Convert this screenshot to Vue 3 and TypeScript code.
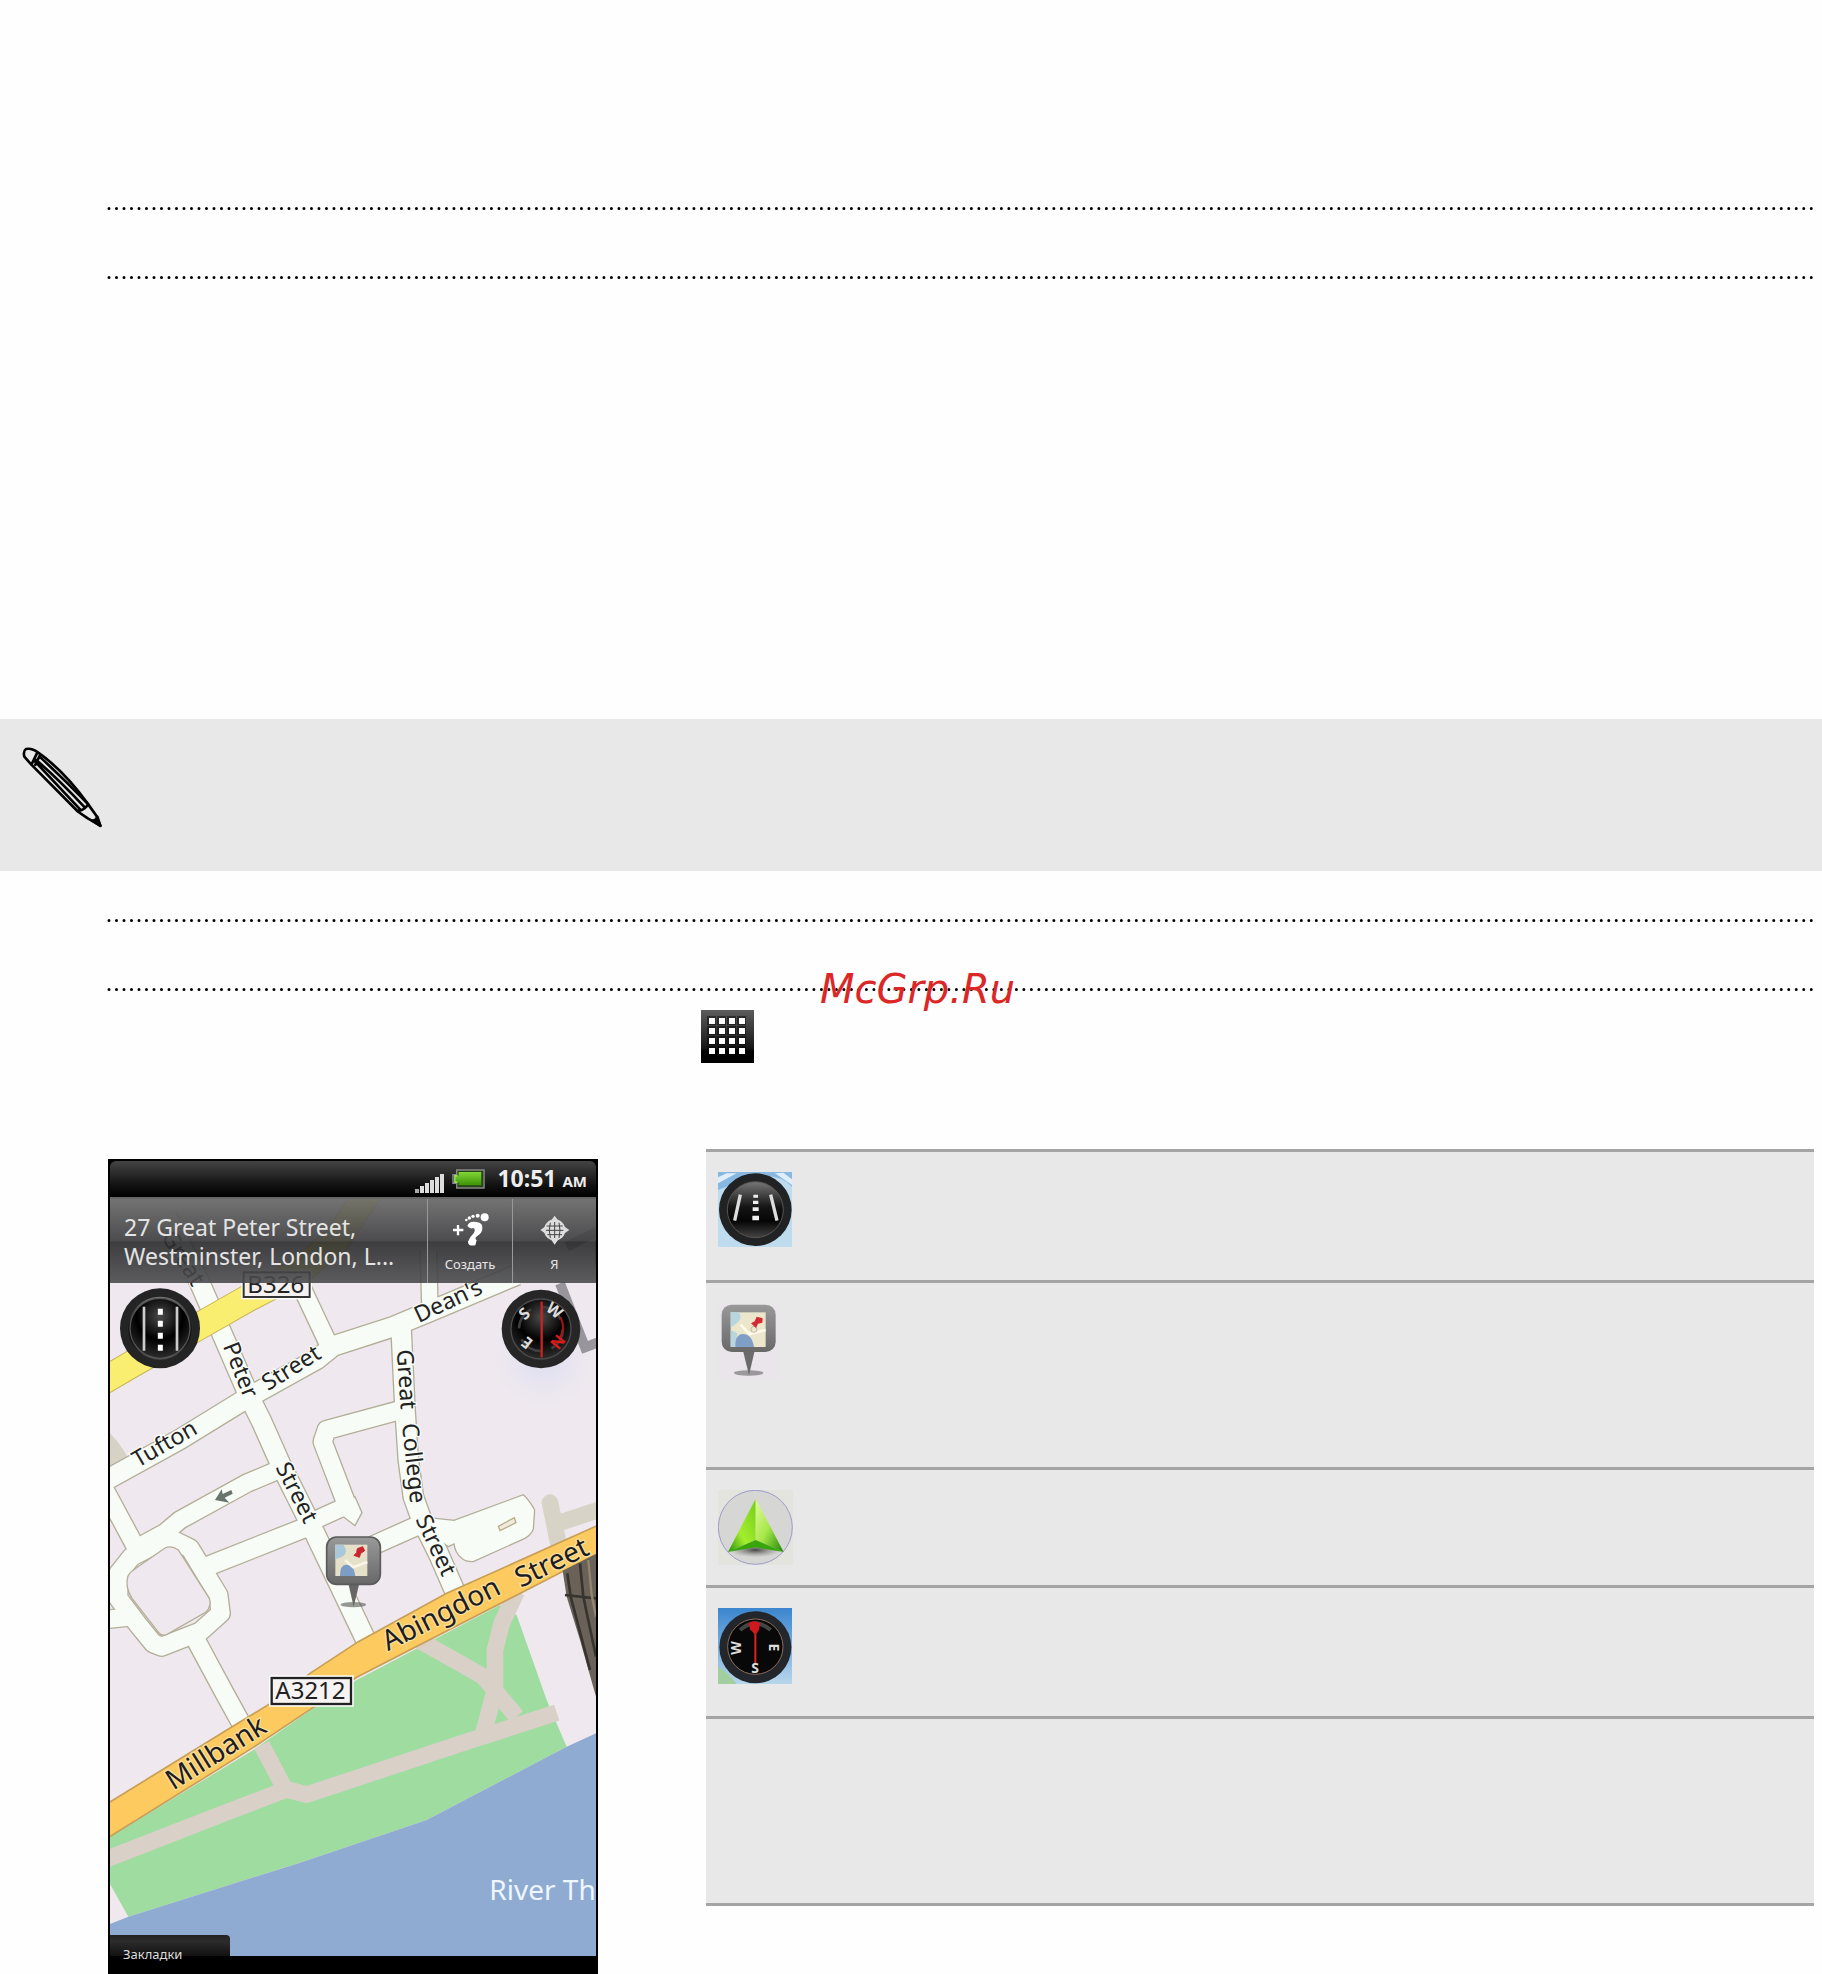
<script setup lang="ts">
interface Label {
  text: string
  x: number
  y: number
  angle: number
  large?: boolean
}

const roads: { d: string; w: number }[] = [
  { d: 'M200 200 L300 400 L370 560 L450 745 L485 815 L545 950 L635 1130 L800 1475 L815 1510', w: 58 },
  { d: 'M10 995 L240 868 L440 745 L650 628 L700 588 L880 530 L1000 480 L1250 375', w: 58 },
  { d: 'M590 380 L682 575', w: 52 },
  { d: 'M985 300 L990 480', w: 46 },
  { d: 'M903 530 L915 780 L925 930 L940 1040 L965 1110 L1015 1210 L1085 1370', w: 58 },
  { d: 'M920 775 L680 840 L668 875 L735 1050 L752 1090', w: 54 },
  { d: 'M635 1115 L745 1065', w: 50 },
  { d: 'M540 958 L440 1000 L240 1110 L195 1148 L90 1205', w: 52 },
  { d: 'M320 1250 L610 1135', w: 56 },
  { d: 'M10 1010 L112 1200', w: 52 },
  { d: 'M0 1410 L100 1400', w: 52 },
  { d: 'M95 1220 L205 1163 L270 1195 L355 1335 L362 1390 L300 1445 L185 1490 L160 1480 L115 1425 L55 1345 L55 1270 Z', w: 54 },
  { d: 'M285 1465 L375 1632 L440 1750', w: 54 },
  { d: 'M800 1195 L950 1128 L1060 1140', w: 54 },
]

const lot = 'M1005 1132 L1270 1034 Q1288 1050 1304 1080 L1300 1138 Q1292 1156 1275 1165 L1120 1235 Q1098 1236 1085 1225 Q1066 1210 1062 1182 L1045 1190 L990 1150 Z'
const island = 'M195 1194 Q215 1185 235 1200 L328 1345 Q336 1368 318 1386 L200 1454 Q186 1458 176 1448 L96 1345 Q74 1310 84 1278 Q90 1266 100 1260 Z'

const labels: Label[] = [
  { text: 'Peter', x: 368, y: 588, angle: 68 },
  { text: 'Street', x: 504, y: 724, angle: -32 },
  { text: 'Tufton', x: 114, y: 954, angle: -30 },
  { text: "Dean's", x: 956, y: 520, angle: -25 },
  { text: 'Great', x: 890, y: 600, angle: 86 },
  { text: 'College', x: 906, y: 822, angle: 84 },
  { text: 'Street', x: 946, y: 1108, angle: 65 },
  { text: 'Street', x: 526, y: 952, angle: 63 },
  { text: 'Abingdon', x: 864, y: 1504, angle: -27, large: true },
  { text: 'Street', x: 1262, y: 1314, angle: -26, large: true },
  { text: 'Millbank', x: 220, y: 1922, angle: -32, large: true },
]

const dots = [0, 1, 2, 3]
const bars = [0, 1, 2, 3, 4, 5]
const rows: { icon: string; size: string }[] = [
  { icon: 'road', size: 'short' },
  { icon: 'pin', size: 'tall' },
  { icon: 'arrow', size: 'slim' },
  { icon: 'compass', size: 'short' },
  { icon: '', size: 'tall' },
]
</script>

<template>
  <main class="page">
    <svg class="dotted first" aria-hidden="true"><line x1="2" y1="50%" x2="100%" y2="50%" pathLength="2271" /></svg>
    <svg class="dotted second" aria-hidden="true"><line x1="2" y1="50%" x2="100%" y2="50%" pathLength="2271" /></svg>

    <aside class="note">
      <svg class="pencil" viewBox="60 105 250 250" aria-hidden="true">
        <path d="M92 162 L70 137 Q66 120 75 114 Q92 110 112 125 Q190 180 262 280 L287 315 L299 345 L260 322 L232 303 Z" />
        <path d="M92 160 L109 125 M103 162 L117 133 M99 148 L238 296 M106 147 Q178 210 252 290 M116 137 Q190 205 262 280 M232 300 Q246 300 262 282" />
        <path class="tip" d="M299 346 L275 330 Q288 328 290 318 Z" />
      </svg>
    </aside>

    <svg class="dotted third" aria-hidden="true"><line x1="2" y1="50%" x2="100%" y2="50%" pathLength="2271" /></svg>
    <div class="marked">
      <svg class="dotted" aria-hidden="true"><line x1="2" y1="50%" x2="100%" y2="50%" pathLength="2271" /></svg>
      <span class="watermark">McGrp.Ru</span>
    </div>

    <svg class="apps" viewBox="0 0 53 53" aria-hidden="true">
      <defs>
        <linearGradient id="appsBg" x2="0" y2="1">
          <stop offset="0" stop-color="#5c5c5c" /><stop offset=".72" stop-color="#161616" /><stop offset=".78" stop-color="#000" />
        </linearGradient>
      </defs>
      <rect width="53" height="53" fill="url(#appsBg)" />
      <g v-for="r in dots" :key="r">
        <g v-for="c in dots" :key="c">
          <rect :x="6 + c * 10" :y="6 + r * 10" width="9" height="9" fill="#000" opacity=".45" />
          <rect :x="8 + c * 10" :y="8 + r * 10" width="6" height="6" fill="#fff" />
        </g>
      </g>
    </svg>

    <div class="content">
      <section class="phone">
        <header class="status">
          <svg class="signal" viewBox="0 0 29 22" aria-hidden="true">
            <rect v-for="b in bars" :key="b" :x="b * 5" :y="18 - b * 3" width="4" :height="4 + b * 3" :fill="b < 1 ? '#aaa' : '#ddd'" />
          </svg>
          <svg class="battery" viewBox="0 0 35 21" aria-hidden="true">
            <defs><linearGradient id="batt" x2="0" y2="1"><stop offset="0" stop-color="#82d636" /><stop offset="1" stop-color="#3c9407" /></linearGradient></defs>
            <path d="M5 1 H34 V20 H5 V15 H1 V6 H5 Z" fill="#28421a" stroke="#888" stroke-width="1.5" />
            <path d="M7 3 H31 V17 H7 V14 H3 V7 H7 Z" fill="url(#batt)" />
            <path d="M6 7 H3 V14 H6" fill="none" stroke="#9be05b" stroke-width="1.5" />
          </svg>
          <span class="time">10:51<small>AM</small></span>
        </header>

        <div class="viewport">
          <svg class="map" viewBox="30 141 1458 2331" role="img" aria-label="Westminster">
            <defs>
              <radialGradient id="dial" cx=".5" cy=".3" r=".7">
                <stop offset="0" stop-color="#4a4a4a" /><stop offset=".55" stop-color="#000" /><stop offset="1" stop-color="#2c2c2c" />
              </radialGradient>
              <linearGradient id="gloss" x2="0" y2="1">
                <stop offset="0" stop-color="#777" /><stop offset=".45" stop-color="#151515" /><stop offset=".7" stop-color="#050505" /><stop offset="1" stop-color="#444" />
              </linearGradient>
              <linearGradient id="pinBody" x2="0" y2="1">
                <stop offset="0" stop-color="#999" /><stop offset="1" stop-color="#686868" />
              </linearGradient>
              <radialGradient id="haze">
                <stop offset="0" stop-color="#d8dcf2" /><stop offset="1" stop-color="#efe9ef" stop-opacity="0" />
              </radialGradient>
            </defs>
            <rect x="30" y="141" width="1458" height="2331" fill="#efe9ef" />
            <circle cx="1330" cy="620" r="190" fill="url(#haze)" />
            <path d="M30 850 Q60 880 85 925 L30 960 Z" fill="#d6d2c6" />
            <path d="M1350 1058 L1375 1180 M1380 1118 L1500 1078" stroke="#d8d3c7" stroke-width="50" stroke-linecap="round" fill="none" />
            <path d="M1380 400 L1455 592 L1500 575 M1400 290 L1500 240 V350" stroke="#98959d" stroke-width="30" fill="none" />

            <g fill="none" stroke="#b3ae98" stroke-linejoin="round">
              <path v-for="(r, i) in roads" :key="i" :d="r.d" :stroke-width="r.w + 8" />
            </g>
            <path :d="lot" fill="#f8fcf7" stroke="#b3ae98" stroke-width="4" />
            <path d="M730 1100 L765 1127 L786 1088 L765 1040 L700 1080 Z" fill="#f8fcf7" stroke="#b3ae98" stroke-width="4" />
            <g fill="none" stroke="#f8fcf7" stroke-linejoin="round">
              <path v-for="(r, i) in roads" :key="i" :d="r.d" :stroke-width="r.w" />
            </g>
            <path :d="island" fill="#efe9ef" stroke="#b3ae98" stroke-width="4" />
            <path d="M1195 1129 L1243 1103 L1248 1118 L1200 1142 Z" fill="#efe9df" stroke="#b9ae88" stroke-width="4" />

            <path d="M-20 710 L100 640 L300 527 L440 447 L590 370 L710 270 L810 120" fill="none" stroke="#c9b45c" stroke-width="84" />
            <path d="M-20 710 L100 640 L300 527 L440 447 L590 370 L710 270 L810 120" fill="none" stroke="#f9ee70" stroke-width="78" />

            <path d="M30 2060 L460 1800 L640 1675 L770 1590 L1200 1365 L1250 1395 L1340 1650 L1400 1790 L980 2010 L600 2138 L85 2300 L30 2202 Z" fill="#9fdca0" />
            <g fill="none" stroke="#d9d0c8" stroke-width="50" stroke-linejoin="round">
              <path d="M20 2127 L380 1987 L560 1918 L620 1934 L1100 1775 L1370 1688" />
              <path d="M485 1785 L555 1918" />
              <path d="M955 1470 L1080 1540 L1150 1580 L1250 1700" />
              <path d="M1250 1325 L1205 1420 L1185 1500 L1185 1620 L1150 1750" />
            </g>
            <path d="M30 2322 L85 2300 L600 2138 L980 2010 L1400 1790 L1488 1750 V2472 H30 Z" fill="#90abd2" />
            <path d="M20 1962 L400 1728 L520 1655 L630 1570 L775 1475 L1040 1330 L1498 1124 V1208 L1270 1325 L770 1582 L640 1672 L460 1792 L20 2066 Z" fill="#fcca5e" stroke="#c79f58" stroke-width="5" />

            <path d="M1388 1262 L1488 1212 V1640 L1440 1470 L1400 1340 Z" fill="#6a6258" />
            <path d="M1395 1335 L1488 1345 M1440 1240 L1450 1340 L1488 1520 M1402 1270 L1412 1340 L1470 1560" stroke="#37332f" stroke-width="8" fill="none" />
            <path d="M1465 1230 L1475 1335 L1488 1400" stroke="#93866f" stroke-width="7" fill="none" />

            <path d="M345 1050 L365 1018 L368 1032 L394 1020 L398 1031 L374 1043 L388 1058 Z" fill="#68746d" />

            <text x="182" y="260" transform="rotate(58 182 260)" class="street">Great</text>
            <text
              v-for="(l, i) in labels" :key="i" :x="l.x" :y="l.y"
              :transform="`rotate(${l.angle} ${l.x} ${l.y})`" :class="l.large ? 'avenue' : 'street'"
            >{{ l.text }}</text>

            <rect x="424" y="360" width="212" height="88" fill="#fff" />
            <rect x="431" y="367" width="198" height="74" fill="#f3f0ef" stroke="#333" stroke-width="6" />
            <text x="442" y="430" class="sign">B326</text>
            <rect x="507" y="1576" width="254" height="94" fill="#fff" />
            <rect x="515" y="1584" width="238" height="78" fill="#f6f3f2" stroke="#222" stroke-width="7" />
            <text x="526" y="1647" class="sign">A3212</text>
            <text x="1168" y="2250" class="river">River Th</text>

            <ellipse cx="760" cy="1364" rx="38" ry="8" fill="#555" opacity=".6" />
            <path d="M744 1296 H779 L761 1370 Z" fill="#666" />
            <rect x="680" y="1161" width="161" height="142" rx="30" fill="url(#pinBody)" stroke="#5a5a5a" stroke-width="5" />
            <rect x="706" y="1184" width="96" height="94" fill="#e5e0c8" />
            <path d="M706 1184 H730 Q748 1210 722 1222 L706 1228 Z" fill="#a9c8da" />
            <path d="M720 1278 Q720 1242 740 1244 Q762 1244 766 1278 Z" fill="#7c9dc6" />
            <path d="M735 1230 L760 1252 L802 1236" stroke="#f8f5e6" stroke-width="8" fill="none" />
            <path d="M762 1216 L770 1208 L772 1196 L788 1190 L794 1202 L782 1210 L778 1222 Z" fill="#cc2430" stroke="#cc2430" stroke-width="3" />

            <g>
              <circle cx="180" cy="535" r="120" fill="#242424" />
              <circle cx="180" cy="535" r="95" fill="url(#gloss)" />
              <circle cx="180" cy="535" r="90" fill="url(#dial)" stroke="#555" stroke-width="4" />
              <path d="M132 470 V602 M231 470 V602" stroke="#ccc" stroke-width="8" />
              <path d="M181 476 V606" stroke="#fff" stroke-width="15" stroke-dasharray="18 18" />
            </g>
            <g>
              <circle cx="1323" cy="537" r="118" fill="#262626" />
              <circle cx="1323" cy="537" r="90" fill="url(#dial)" stroke="#4b4b4b" stroke-width="4" />
              <circle cx="1323" cy="537" r="66" fill="none" stroke="#3f3f3f" stroke-width="8" stroke-dasharray="70 34" />
              <path d="M1325 455 V622" stroke="#c22" stroke-width="7" />
              <path d="M1382 502 Q1398 536 1378 565" stroke="#a11" stroke-width="6" fill="none" />
              <text x="0" y="18" transform="translate(1272 490) rotate(-42)" class="dir">S</text>
              <text x="0" y="18" transform="translate(1364 480) rotate(38)" class="dir">W</text>
              <text x="0" y="18" transform="translate(1280 580) rotate(218)" class="dir">E</text>
              <text x="0" y="18" transform="translate(1374 576) rotate(128)" class="dir north">N</text>
            </g>
          </svg>

          <div class="toolbar">
            <p class="address">27 Great Peter Street,<br>Westminster, London, L...</p>
            <button type="button" class="tool">
              <svg viewBox="1050 185 120 110" aria-hidden="true">
                <path d="M1059 240 H1090 M1074 225 V256" stroke="#fff" stroke-width="7" />
                <g fill="#fff">
                  <circle cx="1154" cy="202" r="12" /><circle cx="1133" cy="197" r="6" /><circle cx="1119" cy="199" r="5" /><circle cx="1108" cy="204" r="5" /><circle cx="1099" cy="210" r="4" />
                  <path d="M1102 228 Q1106 212 1130 216 Q1150 218 1147 238 Q1145 250 1132 258 Q1122 264 1130 271 L1126 286 Q1104 290 1104 275 Q1108 262 1121 250 Q1128 238 1120 234 Q1110 238 1102 228 Z" />
                </g>
              </svg>
              <span>Создать</span>
            </button>
            <button type="button" class="tool">
              <svg viewBox="1307 185 120 110" aria-hidden="true">
                <path d="M1366 197 L1376 211 H1356 Z M1366 284 L1376 270 H1356 Z M1323 240 L1337 230 V250 Z M1410 240 L1396 230 V250 Z" fill="#ddd" />
                <circle cx="1366" cy="240" r="32" fill="#ddd" />
                <path d="M1342 228 H1390 M1340 241 H1392 M1344 254 H1388 M1366 216 V264 M1353 218 Q1347 240 1353 264 M1379 218 Q1385 240 1379 264" stroke="#444" stroke-width="3" fill="none" />
              </svg>
              <span>Я</span>
            </button>
          </div>

          <footer class="drawer">
            <button type="button" class="tab">Закладки</button>
            <div class="bar"></div>
          </footer>
        </div>
      </section>

      <table class="legend">
        <tbody>
          <tr v-for="(row, i) in rows" :key="i" :class="row.size">
            <td class="icon">
              <svg v-if="row.icon === 'road'" width="74" height="75" viewBox="54 96 222 225" aria-hidden="true">
                <rect x="54" y="96" width="222" height="225" fill="#bfdcee" />
                <path d="M54 96 H276 V140 Q250 110 200 108 Q130 120 54 150 Z" fill="#87b8e2" />
                <path d="M54 130 L110 100 H80 L54 112 Z M225 100 L276 135 V118 L250 98 Z" fill="#dfeefa" />
                <circle cx="166" cy="209" r="109" fill="#202224" />
                <circle cx="166" cy="209" r="84" fill="url(#gloss)" stroke="#59524d" stroke-width="3" />
                <path d="M121 164 L104 242 M212 164 L231 242" stroke="#ddd" stroke-width="10" />
                <path d="M160 164 H174 V173 H160 Z M159 182 H175 V192 H159 Z M158 202 H176 V213 H158 Z M157 227 H177 V241 H157 Z" fill="#eee" />
              </svg>
              <svg v-else-if="row.icon === 'pin'" width="60" height="75" viewBox="54 489 180 225" aria-hidden="true">
                <rect x="54" y="489" width="180" height="225" fill="#eae5ea" />
                <ellipse cx="146" cy="699" rx="44" ry="8" fill="#777" opacity=".7" />
                <path d="M129 632 H164 L147 706 Z" fill="#6b6b6b" />
                <rect x="65" y="494" width="162" height="142" rx="30" fill="url(#pinBody)" />
                <rect x="92" y="517" width="105" height="104" fill="#ece6cc" />
                <path d="M92 517 H116 Q134 540 92 562 Z M92 570 L112 580 L105 621 H92 Z" fill="#b7d5df" />
                <path d="M106 621 Q104 584 128 582 Q156 582 162 621 Z" fill="#809fc6" />
                <path d="M122 554 L148 582 L197 570" stroke="#fffbea" stroke-width="8" fill="none" />
                <circle cx="162" cy="568" r="9" fill="none" stroke="#c9b4a0" stroke-width="3" />
                <path d="M153 550 L164 544 L170 530 L188 535 L187 548 L174 551 L168 564 Z" fill="#d52a34" />
              </svg>
              <svg v-else-if="row.icon === 'arrow'" width="75" height="75" viewBox="54 90 225 225" aria-hidden="true">
                <defs>
                  <linearGradient id="gl" x1="1" y1="0" x2="0" y2="1"><stop offset="0" stop-color="#72cf16" /><stop offset=".6" stop-color="#a4ed2e" /><stop offset="1" stop-color="#239006" /></linearGradient>
                  <linearGradient id="gr" x2="1" y2="1"><stop offset="0" stop-color="#dffb9a" /><stop offset=".5" stop-color="#a8e74a" /><stop offset="1" stop-color="#198404" /></linearGradient>
                  <radialGradient id="sh"><stop offset="0" stop-color="#444" /><stop offset="1" stop-color="#888" stop-opacity="0" /></radialGradient>
                </defs>
                <rect x="54" y="90" width="225" height="225" fill="#e4e4df" />
                <circle cx="166" cy="202" r="111" fill="#d6d6d4" stroke="#9c9cc8" stroke-width="3" />
                <ellipse cx="166" cy="270" rx="80" ry="22" fill="url(#sh)" />
                <path d="M167 116 L84 276 L167 240 Z" fill="url(#gl)" />
                <path d="M167 116 L251 276 L167 240 Z" fill="url(#gr)" />
                <path d="M84 276 L167 240 L251 276 L167 262 Z" fill="#37a60b" />
              </svg>
              <svg v-else-if="row.icon === 'compass'" width="74" height="76" viewBox="54 444 222 228" aria-hidden="true">
                <defs><linearGradient id="sky" x2="0" y2="1"><stop offset="0" stop-color="#3b86cf" /><stop offset="1" stop-color="#b7d6ec" /></linearGradient></defs>
                <rect x="54" y="444" width="222" height="228" fill="url(#sky)" />
                <path d="M54 620 Q90 640 110 672 H54 Z" fill="#a3cfa0" />
                <circle cx="166" cy="562" r="108" fill="#23262b" />
                <circle cx="166" cy="560" r="83" fill="#080808" stroke="#8a6d5c" stroke-width="3" />
                <path d="M120 510 Q166 470 212 510" stroke="#444" stroke-width="12" fill="none" />
                <path d="M166 490 V610" stroke="#d22" stroke-width="6" />
                <path d="M146 490 Q162 478 180 490 L177 510 L166 525 L150 508 Z" fill="#d0191f" />
                <text x="0" y="16" transform="translate(106 564) rotate(-90)" class="mark">W</text>
                <text x="0" y="16" transform="translate(222 562) rotate(90)" class="mark">E</text>
                <text x="165" y="638" class="mark">S</text>
              </svg>
            </td>
            <td></td>
          </tr>
        </tbody>
      </table>
    </div>
  </main>
</template>

<style>
body {
  margin: 0;
  background: #fefefe;
}
</style>

<style scoped>
.page {
  overflow: hidden;
  font-family: "Noto Sans", "Open Sans", sans-serif;
}
.dotted {
  display: block;
  width: calc(100% - 117px);
  height: 5px;
  margin-left: 107px;
  overflow: visible;
}
.dotted line {
  stroke: #000;
  stroke-width: 3px;
  stroke-linecap: round;
  stroke-dasharray: 0 10;
}
.first { margin-top: 206px; }
.second { margin-top: 64px; }
.third { margin-top: 47px; }
.note {
  margin-top: 439px;
  height: 152px;
  background: #e8e8e8;
}
.pencil {
  display: block;
  width: 83px;
  height: 83px;
  padding: 27px 0 0 21px;
  fill: none;
  stroke: #000;
  stroke-width: 8px;
  stroke-linejoin: round;
  stroke-linecap: round;
}
.pencil .tip { fill: #000; }
.marked {
  position: relative;
  margin-top: 64px;
}
.watermark {
  position: absolute;
  left: 45%;
  top: -22px;
  font: italic 40px/48px "DejaVu Sans", sans-serif;
  color: #dc2727;
}
.apps {
  display: block;
  width: 53px;
  height: 53px;
  margin: 18px 0 0 701px;
}
.content {
  display: grid;
  grid-template-columns: 490px 1fr;
  column-gap: 108px;
  align-items: start;
  margin: 86px 8px 0 108px;
}
.phone {
  margin-top: 10px;
  border: 2px solid #000;
  border-bottom: 0;
  background: #000;
}
.status {
  display: flex;
  align-items: center;
  justify-content: flex-end;
  height: 36px;
  padding-right: 9px;
  background: linear-gradient(#444, #101010 70%, #000);
  border-radius: 6px 6px 0 0;
  color: #fff;
}
.signal { width: 29px; height: 22px; margin-right: 8px; margin-top: 5px; }
.battery { width: 33px; height: 20px; margin-right: 12px; }
.time {
  font-size: 23px;
  line-height: 30px;
  font-weight: 700;
  color: #eee;
}
.time small { margin-left: 6px; font-size: 15px; }
.viewport {
  position: relative;
}
.map {
  display: block;
  width: 100%;
}
.street, .avenue {
  fill: #222;
  stroke: #f8fcf7;
  stroke-width: 8px;
  paint-order: stroke;
}
.street { font-size: 69px; }
.avenue { font-size: 84px; stroke: #fbdf9c; fill: #1c1c22; }
.sign { font-size: 72px; fill: #222; }
.river { font-size: 84px; fill: #eef6ff; }
.dir, .mark { font-size: 48px; font-weight: 700; fill: #ddd; text-anchor: middle; }
.mark { font-size: 42px; }
.north { fill: #e01818; }
.toolbar {
  position: absolute;
  inset: 0 0 auto 0;
  display: grid;
  grid-template-columns: 1fr 85px 84px;
  height: 86px;
  box-sizing: border-box;
  border-top: 2px solid #666;
  background: linear-gradient(rgba(105, 105, 105, .92), rgba(62, 62, 64, .92) 50%, rgba(42, 42, 44, .9) 51%, rgba(76, 76, 78, .9));
}
.address {
  margin: 0;
  padding: 14px 0 0 14px;
  font-size: 23px;
  line-height: 29px;
  color: #e4e4e4;
  white-space: nowrap;
}
.tool {
  display: flex;
  flex-direction: column;
  align-items: center;
  padding: 12px 0 0;
  border: 0;
  border-left: 1px solid #999;
  background: none;
  color: #e6e6e6;
  font: 13px/18px "Noto Sans", sans-serif;
}
.tool svg { width: 40px; height: 38px; margin-bottom: 6px; }
.drawer {
  position: absolute;
  inset: auto 0 0 0;
}
.tab {
  display: block;
  width: 120px;
  height: 21px;
  padding: 9px 0 0 13px;
  border: 0;
  border-radius: 0 4px 0 0;
  background: linear-gradient(#222, #2c2c2c 30%, #111);
  color: #ddd;
  font: 13px/20px "Noto Sans", sans-serif;
  text-align: left;
  overflow: visible;
}
.bar {
  height: 18px;
  background: #000;
}
.legend {
  width: 100%;
  border-collapse: separate;
  border-spacing: 0;
  background: #e8e8e8;
  border-bottom: 3px solid #a4a4a4;
}
.legend td {
  box-sizing: border-box;
  padding: 20px 0 0 12px;
  border-top: 3px solid #a4a4a4;
  vertical-align: top;
}
.legend .icon { width: 100px; }
.legend svg { display: block; }
.short td { height: 131px; }
.tall td { height: 187px; }
.slim td { height: 118px; }
</style>
